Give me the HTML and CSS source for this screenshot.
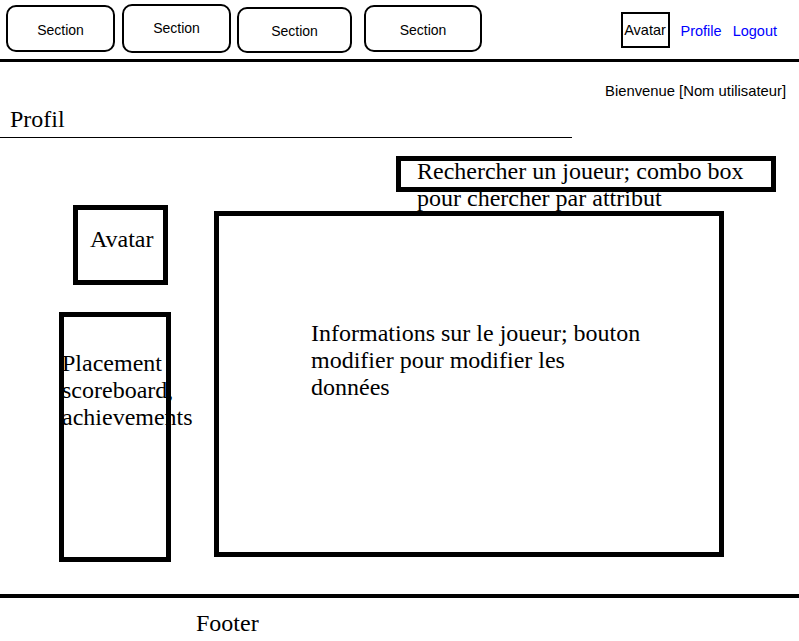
FILE: index.html
```html
<!DOCTYPE html>
<html lang="fr">
<head>
    <meta charset="UTF-8">
    <meta name="viewport" content="width=device-width, initial-scale=1.0">
    <title>Profil</title>
    <link rel="stylesheet" href="styles.css">
</head>
<body>
    <header class="topbar">
        <nav class="sections">
            <a href="#" class="section section-1">Section</a>
            <a href="#" class="section section-2">Section</a>
            <a href="#" class="section section-3">Section</a>
            <a href="#" class="section section-4">Section</a>
        </nav>
        <div class="user-nav">
            <span class="avatar-small">Avatar</span>
            <a href="/profile">Profile</a>
            <a href="/logout">Logout</a>
        </div>
    </header>

    <p class="welcome">Bienvenue [Nom utilisateur]</p>

    <h1 class="page-title">Profil</h1>

    <div class="search">
        <p>Rechercher un joueur; combo box pour chercher par attribut</p>
    </div>

    <main class="content">
        <div class="side">
            <div class="avatar-box">Avatar</div>
            <div class="placement">
                <p>Placement scoreboard, achievements</p>
            </div>
        </div>
        <section class="info">
            <p>Informations sur le joueur; bouton modifier pour modifier les données</p>
        </section>
    </main>

    <footer class="footer">Footer</footer>
</body>
</html>
```

FILE: styles.css
```css
body {
    margin: 0;
    padding: 0;
    font-family: "Liberation Serif", "Times New Roman", serif;
    font-size: 24px;
    line-height: 27px;
    color: #000;
    background: #fff;
    box-sizing: border-box;
}

*,
*::before,
*::after {
    box-sizing: inherit;
}

p {
    margin: 0;
}

/* top bar */
.topbar {
    display: flex;
    align-items: flex-start;
    height: 62px;
    border-bottom: 3px solid #000;
    font-family: "Liberation Sans", Arial, sans-serif;
    font-size: 14px;
    line-height: 17px;
}

.sections {
    display: flex;
    align-items: flex-start;
}

.section {
    display: flex;
    justify-content: center;
    align-items: center;
    padding-top: 3px;
    border: 2px solid #000;
    border-radius: 10px;
    color: #000;
    text-decoration: none;
}

.section-1 {
    margin: 5px 0 0 6px;
    width: 109px;
    height: 47px;
}

.section-2 {
    margin: 4px 0 0 7px;
    width: 109px;
    height: 49px;
    padding-top: 0;
}

.section-3 {
    margin: 7px 0 0 6px;
    width: 115px;
    height: 46px;
}

.section-4 {
    margin: 5px 0 0 12px;
    width: 118px;
    height: 47px;
}

.user-nav {
    display: flex;
    align-items: center;
    margin: 12px 22px 0 auto;
    height: 36px;
    font-size: 14.5px;
}

.avatar-small {
    display: flex;
    align-items: center;
    justify-content: center;
    width: 49px;
    height: 36px;
    border: 2px solid #000;
    margin-right: 9px;
}

.user-nav a {
    color: #00f;
    text-decoration: none;
    margin-left: 2px;
    padding-top: 2px;
}

.user-nav a + a {
    margin-left: 11px;
}

.welcome {
    margin-top: 20px;
    padding-right: 13px;
    text-align: right;
    font-family: "Liberation Sans", Arial, sans-serif;
    font-size: 14.8px;
    line-height: 18px;
}

.page-title {
    width: 572px;
    margin: 6px 0 0;
    padding: 0 0 4px 10px;
    border-bottom: 1px solid #000;
    font-size: 24px;
    font-weight: normal;
    line-height: 27px;
}

/* search */
.search {
    width: 380px;
    height: 36px;
    margin: 18px 0 0 396px;
    padding: 0 16px;
    border: 5px solid #000;
}

.search p {
    margin-top: -3px;
}

/* main area */
.content {
    display: flex;
    align-items: flex-start;
    margin-top: 13px;
}

.side {
    display: flex;
    flex-direction: column;
    width: 171px;
    flex-shrink: 0;
}

.avatar-box {
    width: 95px;
    height: 80px;
    margin-left: 73px;
    padding: 16px 0 0 12px;
    border: 5px solid #000;
}

.placement {
    width: 112px;
    height: 250px;
    margin: 27px 0 0 59px;
    padding: 33px 0 0 0;
    border: 5px solid #000;
}

.placement p {
    margin-left: -2px;
}

.info {
    width: 510px;
    height: 346px;
    margin: 6px 0 0 43px;
    padding: 104px 0 0 92px;
    border: 5px solid #000;
}

.info p {
    width: 332px;
}

.footer {
    margin-top: 32px;
    padding: 12px 0 0 196px;
    border-top: 4px solid #000;
}
```
